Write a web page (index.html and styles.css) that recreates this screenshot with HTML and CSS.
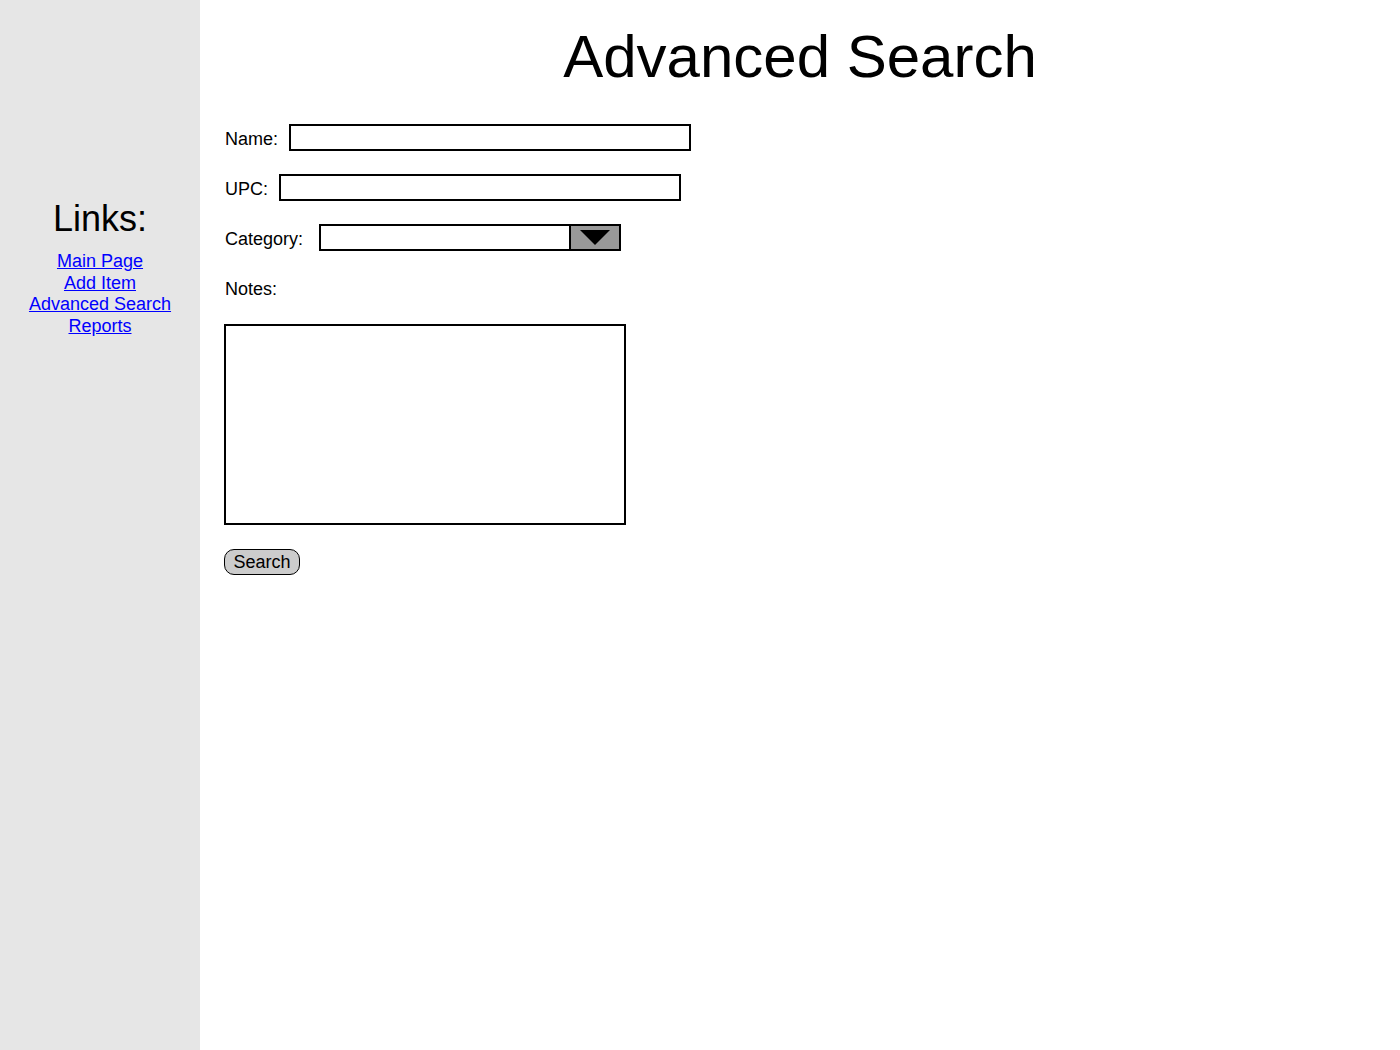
FILE: index.html
```html
<!DOCTYPE html>
<html>
<head>
<meta charset="utf-8">
<title>Advanced Search</title>
<link rel="stylesheet" href="styles.css">
</head>
<body>
<div class="page">
  <nav class="sidebar">
    <h2 class="links-title">Links:</h2>
    <ul class="links">
      <li><a href="#">Main Page</a></li>
      <li><a href="#">Add Item</a></li>
      <li><a href="#">Advanced Search</a></li>
      <li><a href="#">Reports</a></li>
    </ul>
  </nav>
  <main class="content">
    <h1 class="title">Advanced Search</h1>
    <form class="form">
      <div class="row">
        <label class="label">Name:</label>
        <div class="input"></div>
      </div>
      <div class="row">
        <label class="label">UPC:</label>
        <div class="input"></div>
      </div>
      <div class="row">
        <label class="label label-wide">Category:</label>
        <div class="select">
          <div class="select-value"></div>
          <div class="select-btn"><span class="arrow"></span></div>
        </div>
      </div>
      <div class="row">
        <label class="label">Notes:</label>
      </div>
      <div class="textarea"></div>
      <div class="actions">
        <button type="button" class="btn">Search</button>
      </div>
    </form>
  </main>
</div>
</body>
</html>
```

FILE: styles.css
```css
html, body {
  margin: 0;
  padding: 0;
  background: #fff;
  font-family: "Liberation Sans", Arial, sans-serif;
  color: #000;
}

.page {
  display: flex;
  min-height: 1050px;
}

.sidebar {
  width: 200px;
  flex: 0 0 200px;
  background: #e6e6e6;
  text-align: center;
  padding-top: 199px;
  box-sizing: border-box;
}

.links-title {
  margin: 0;
  font-size: 36px;
  font-weight: normal;
  line-height: 40px;
}

.links {
  list-style: none;
  margin: 12px 0 0;
  padding: 0;
  font-size: 18px;
  line-height: 21.7px;
}

.links a {
  color: #0000ff;
  text-decoration: underline;
}

.content {
  flex: 1;
  padding-left: 24px;
}

.title {
  margin: 23px 0 0 -24px;
  font-size: 60px;
  font-weight: normal;
  line-height: 67px;
  text-align: center;
}

.form {
  margin-top: 34px;
  display: flex;
  flex-direction: column;
  align-items: flex-start;
}

.row {
  display: flex;
  align-items: center;
  height: 27px;
  margin-bottom: 23px;
}

.label {
  font-size: 18px;
  padding: 4px 0 0 1px;
  margin-right: 11px;
}

.label-wide {
  margin-right: 16px;
}

.input {
  width: 402px;
  height: 27px;
  box-sizing: border-box;
  border: 2px solid #000;
  background: #fff;
}

.select {
  display: flex;
  width: 302px;
  height: 27px;
  box-sizing: border-box;
  border: 2px solid #000;
  background: #fff;
}

.select-value {
  flex: 1;
}

.select-btn {
  width: 48px;
  border-left: 2px solid #000;
  background: #999;
  display: flex;
  align-items: center;
  justify-content: center;
}

.arrow {
  width: 0;
  height: 0;
  border-left: 15px solid transparent;
  border-right: 15px solid transparent;
  border-top: 15px solid #000;
}

.textarea {
  width: 402px;
  height: 201px;
  box-sizing: border-box;
  border: 2px solid #000;
  background: #fff;
}

.actions {
  margin-top: 24px;
}

.btn {
  width: 76px;
  height: 26px;
  box-sizing: border-box;
  padding: 0;
  border: 1px solid #000;
  border-radius: 10px;
  background: #cccccc;
  font-family: "Liberation Sans", Arial, sans-serif;
  font-size: 18px;
  line-height: 22px;
  color: #000;
}
```
